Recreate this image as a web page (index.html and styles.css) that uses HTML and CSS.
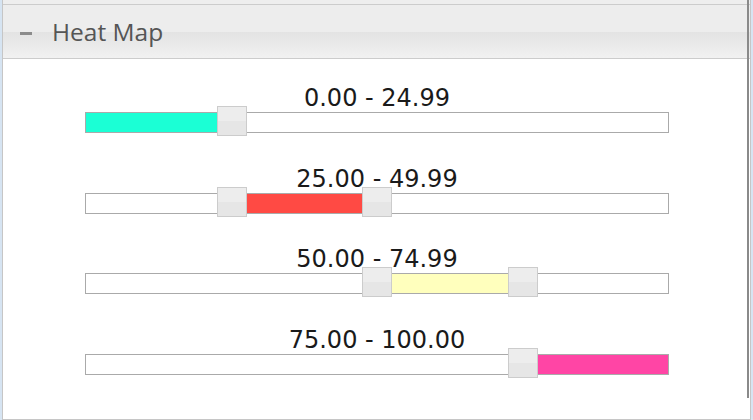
FILE: index.html
```html
<!DOCTYPE html>
<html>
<head>
<meta charset="utf-8">
<link rel="stylesheet" href="styles.css">
</head>
<body>
<div class="panel">
  <div class="topbar"></div>
  <div class="header">
    <span class="toggle"></span>
    <span class="title">Heat Map</span>
  </div>
  <div class="content">
    <div class="range">
      <div class="label">0.00 - 24.99</div>
      <div class="slider">
        <div class="track">
          <div class="fill cyan" style="left:0%;width:25%"></div>
          <div class="handle" style="left:25%"></div>
        </div>
      </div>
    </div>
    <div class="range">
      <div class="label">25.00 - 49.99</div>
      <div class="slider">
        <div class="track">
          <div class="fill red" style="left:25%;width:25%"></div>
          <div class="handle" style="left:25%"></div>
          <div class="handle" style="left:50%"></div>
        </div>
      </div>
    </div>
    <div class="range">
      <div class="label">50.00 - 74.99</div>
      <div class="slider">
        <div class="track">
          <div class="fill yellow" style="left:50%;width:25%"></div>
          <div class="handle" style="left:50%"></div>
          <div class="handle" style="left:75%"></div>
        </div>
      </div>
    </div>
    <div class="range">
      <div class="label">75.00 - 100.00</div>
      <div class="slider">
        <div class="track">
          <div class="fill pink" style="left:75%;width:25%"></div>
          <div class="handle" style="left:75%"></div>
        </div>
      </div>
    </div>
  </div>
  <div class="scrollthumb"></div>
</div>
</body>
</html>
```

FILE: styles.css
```css
html, body {
  margin: 0;
  padding: 0;
}
body {
  background: #d6e4f2;
  width: 753px;
  height: 420px;
  overflow: hidden;
}
.panel {
  position: relative;
  box-sizing: border-box;
  margin-left: 2px;
  width: 749px;
  height: 420px;
  background: #ffffff;
  border-left: 1px solid #c6c6c6;
  border-right: 1px solid #c6c6c6;
  border-bottom: 1px solid #c6c6c6;
  display: flex;
  flex-direction: column;
}
.topbar {
  height: 4px;
  background: #eeeeee;
}
.header {
  box-sizing: border-box;
  height: 55px;
  border-top: 1px solid #cccccc;
  border-bottom: 1px solid #cccccc;
  background: linear-gradient(to bottom, #ededed 0%, #ededed 50%, #e3e3e3 51%, #f1f1f1 100%);
  display: flex;
  align-items: center;
  padding-left: 17px;
}
.toggle {
  width: 12px;
  height: 3px;
  background: #8c8c8c;
  margin-top: 3px;
  margin-right: 20px;
}
.title {
  font-family: "Open Sans", sans-serif;
  font-size: 24.5px;
  color: #555555;
  line-height: 30px;
  margin-top: 1px;
}
.content {
  padding-top: 29px;
  padding-left: 82px;
  display: flex;
  flex-direction: column;
  gap: 32.67px;
}
.range {
  width: 584px;
  display: flex;
  flex-direction: column;
}
.label {
  font-family: "DejaVu Sans", Verdana, sans-serif;
  font-size: 24px;
  line-height: 18px;
  height: 18px;
  padding-top: 1px;
  margin-bottom: -1px;
  color: #1a1a1a;
  text-align: center;
}
.slider {
  height: 30px;
  padding-top: 6px;
  box-sizing: border-box;
}
.track {
  position: relative;
  box-sizing: border-box;
  height: 21px;
  border: 1px solid #aaaaaa;
  background: #ffffff;
}
.fill {
  position: absolute;
  top: 0;
  bottom: 0;
}
.cyan { background: #1bffd5; }
.red { background: #ff4a44; }
.yellow { background: #ffffbd; }
.pink { background: #ff45a5; }
.handle {
  position: absolute;
  top: -7px;
  width: 30px;
  height: 30px;
  margin-left: -15px;
  box-sizing: border-box;
  border: 1px solid #cccccc;
  background: linear-gradient(to bottom, #ededed 0%, #ededed 50%, #e6e6e6 51%, #e6e6e6 100%);
}
.scrollthumb {
  position: absolute;
  top: 0;
  right: 1px;
  width: 2px;
  height: 398px;
  background: #8a8a8a;
}
```
